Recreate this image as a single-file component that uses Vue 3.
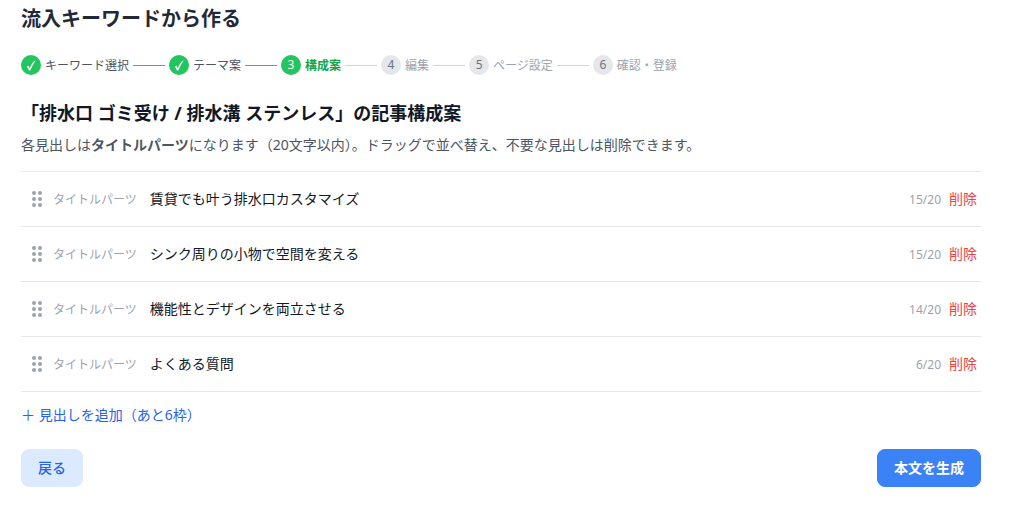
<script setup>
import { ref } from 'vue'

const steps = [
  { label: 'キーワード選択', state: 'done' },
  { label: 'テーマ案', state: 'done' },
  { label: '構成案', state: 'current' },
  { label: '編集', state: 'todo' },
  { label: 'ページ設定', state: 'todo' },
  { label: '確認・登録', state: 'todo' },
]

const maxHeadings = 10
const maxLength = 20
const headings = ref([
  { id: 1, text: '賃貸でも叶う排水口カスタマイズ' },
  { id: 2, text: 'シンク周りの小物で空間を変える' },
  { id: 3, text: '機能性とデザインを両立させる' },
  { id: 4, text: 'よくある質問' },
])
let nextId = 5

function addHeading() {
  if (headings.value.length < maxHeadings) headings.value.push({ id: nextId++, text: '' })
}
function removeHeading(id) {
  headings.value = headings.value.filter((h) => h.id !== id)
}
</script>

<template>
  <main class="page">
    <h1 class="page-title">流入キーワードから作る</h1>

    <ol class="steps">
      <li v-for="(step, i) in steps" :key="step.label" class="step" :class="step.state">
        <span class="badge">
          <svg v-if="step.state === 'done'" class="check" viewBox="0 0 12 12" aria-hidden="true">
            <path d="M1.9 7.4 L3.3 6.7 L4.7 9.2 C6 6.3 7.4 3.9 9.2 1.8 L10.6 1.8 C8.5 4.6 6.8 7.7 5.3 11.4 L4 11.4 C3.4 9.9 2.7 8.6 1.9 7.4 Z" />
          </svg>
          <template v-else>{{ i + 1 }}</template>
        </span>
        <span class="step-label">{{ step.label }}</span>
        <span v-if="i < steps.length - 1" class="connector"></span>
      </li>
    </ol>

    <h2 class="section-title">「排水口 ゴミ受け / 排水溝 ステンレス」の記事構成案</h2>
    <p class="lead">各見出しは<strong>タイトルパーツ</strong>になります（20文字以内）。ドラッグで並べ替え、不要な見出しは削除できます。</p>

    <ul class="headings">
      <li v-for="h in headings" :key="h.id" class="row">
        <svg class="grip" viewBox="0 0 16 16" aria-hidden="true">
          <circle cx="5" cy="2" r="2" />
          <circle cx="11" cy="2" r="2" />
          <circle cx="5" cy="8" r="2" />
          <circle cx="11" cy="8" r="2" />
          <circle cx="5" cy="14" r="2" />
          <circle cx="11" cy="14" r="2" />
        </svg>
        <label class="kind" :for="'heading-' + h.id">タイトルパーツ</label>
        <input :id="'heading-' + h.id" v-model="h.text" class="field" type="text" :maxlength="maxLength" />
        <span class="count">{{ h.text.length }}/{{ maxLength }}</span>
        <button class="remove" type="button" @click="removeHeading(h.id)">削除</button>
      </li>
    </ul>

    <button class="add" type="button" @click="addHeading">＋ 見出しを追加（あと{{ maxHeadings - headings.length }}枠）</button>

    <div class="actions">
      <button class="btn secondary" type="button">戻る</button>
      <button class="btn primary" type="button">本文を生成</button>
    </div>
  </main>
</template>

<style>
body {
  margin: 0;
  background: #fff;
}
</style>

<style scoped>
.page {
  box-sizing: border-box;
  padding: 5px 36px 24px 21px;
  font-family: "Noto Sans", "Noto Sans CJK JP", sans-serif;
  font-size: 14px;
  line-height: 20px;
  color: #111827;
}
.page-title {
  margin: 0 0 21px;
  font-size: 20px;
  line-height: 28px;
  font-weight: 700;
  color: #1f2937;
}
.steps {
  display: flex;
  gap: 4px;
  margin: 0 0 23px;
  padding: 0;
  list-style: none;
  font-size: 12px;
}
.step {
  display: flex;
  align-items: center;
  gap: 4px;
  color: #9ca3af;
  white-space: nowrap;
}
.badge {
  display: flex;
  align-items: center;
  justify-content: center;
  width: 20px;
  height: 20px;
  border-radius: 50%;
  background: #e5e7eb;
  color: #6b7280;
}
.step-label {
  padding-top: 2px;
}
.connector {
  width: 32px;
  height: 1px;
  background: #d1d5db;
}
.done {
  color: #4b5563;
}
.done .badge,
.current .badge {
  background: #22c55e;
  color: #fff;
}
.done .connector {
  background: #22c55e;
}
.current .step-label {
  font-weight: 700;
  color: #16a34a;
}
.check {
  width: 12px;
  height: 12px;
  fill: #fff;
}
.section-title {
  margin: 0 0 8px;
  font-size: 18px;
  line-height: 28px;
  font-weight: 700;
}
.lead {
  margin: 0 0 16px;
  color: #4b5563;
}
.headings {
  margin: 0 0 13px;
  padding: 0;
  list-style: none;
  border-top: 1px solid #e5e7eb;
}
.row {
  display: flex;
  align-items: center;
  gap: 8px;
  padding: 12px 4px;
  border-bottom: 1px solid #e5e7eb;
}
.grip {
  flex: none;
  width: 16px;
  height: 16px;
  margin-left: 4px;
  fill: #9ca3af;
  cursor: grab;
}
.kind,
.count {
  flex: none;
  padding-top: 2px;
  font-size: 12px;
  color: #9ca3af;
}
.field {
  flex: 1;
  min-width: 0;
  box-sizing: border-box;
  height: 30px;
  padding: 3px 4px 5px;
  border: 1px solid transparent;
  border-radius: 4px;
  background: transparent;
  font: inherit;
  color: inherit;
}
button {
  font: inherit;
  white-space: nowrap;
  cursor: pointer;
}
.remove,
.add {
  padding: 0;
  border: 0;
  background: none;
}
.remove {
  color: #ef4444;
}
.add {
  display: block;
  margin-bottom: 24px;
  color: #2563eb;
}
.actions {
  display: flex;
  justify-content: space-between;
}
.btn {
  padding: 8px 16px;
  border: 1px solid transparent;
  border-radius: 8px;
}
.secondary {
  border-color: #dbeafe;
  background: #dbeafe;
  color: #2563eb;
  font-weight: 500;
}
.primary {
  border-color: #3b82f6;
  background: #3b82f6;
  color: #fff;
  font-weight: 700;
}
</style>
